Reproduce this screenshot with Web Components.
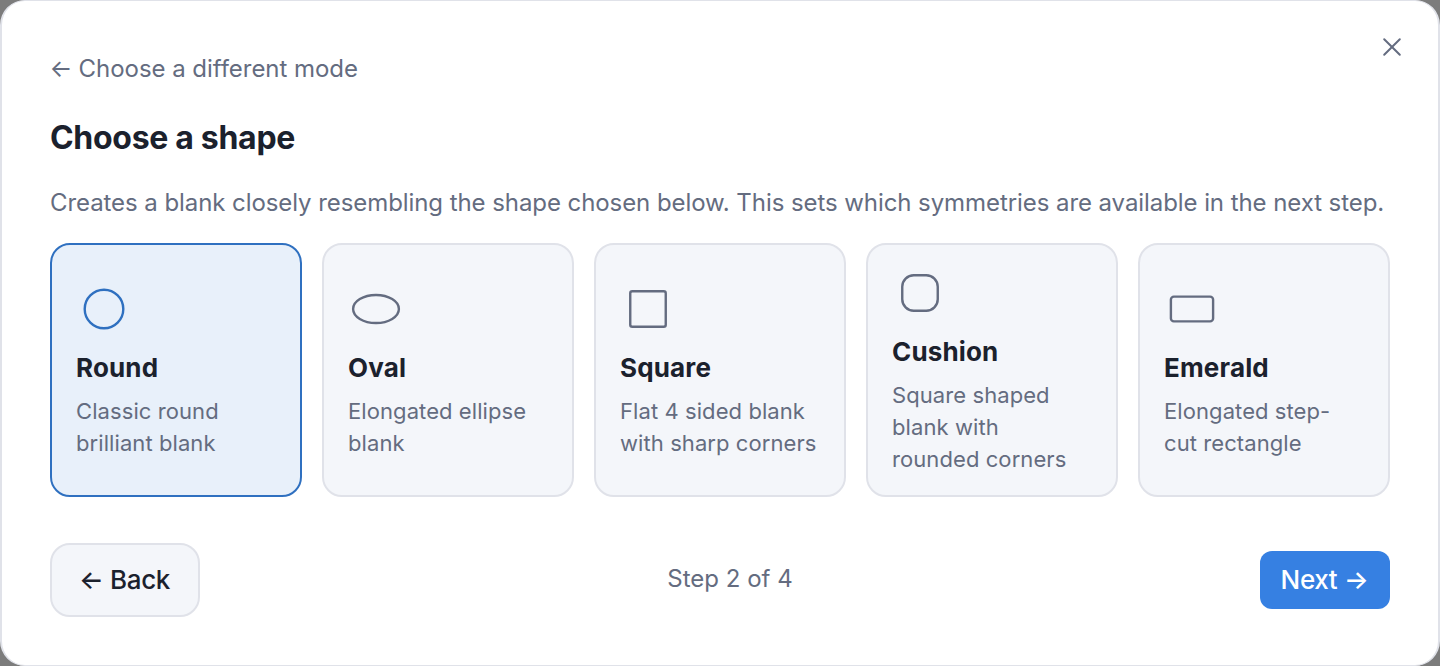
<!DOCTYPE html>
<html lang="en">
<head>
<meta charset="utf-8">
<title>Choose a shape</title>
<style>
  :root {
    --text: #1b212d;
    --muted: #646c80;
    --surface: #f4f6fa;
    --border: #e0e2e9;
    --accent: #2f70c0;
    --accent-soft: #e8f0fa;
    --primary: #3680e2;
  }
  body {
    margin: 0;
    background: #7c7c7c;
    color: var(--text);
    font-family: Inter, "Liberation Sans", sans-serif;
  }
</style>
</head>
<body>
<wizard-dialog>
  <back-link slot="mode">Choose a different mode</back-link>
  <span slot="title">Choose a shape</span>
  <span slot="intro">Creates a blank closely resembling the shape chosen below. This sets which symmetries are available in the next step.</span>
  <shape-card shape="round" name="Round" selected>Classic round brilliant blank</shape-card>
  <shape-card shape="oval" name="Oval">Elongated ellipse blank</shape-card>
  <shape-card shape="square" name="Square">Flat 4 sided blank with sharp corners</shape-card>
  <shape-card shape="cushion" name="Cushion">Square shaped blank with rounded corners</shape-card>
  <shape-card shape="emerald" name="Emerald">Elongated step-cut rectangle</shape-card>
  <wizard-button slot="footer">← Back</wizard-button>
  <step-count slot="footer">Step 2 of 4</step-count>
  <wizard-button slot="footer" primary>Next →</wizard-button>
</wizard-dialog>

<script>
// Outlines of the blanks, all drawn in a 56x56 box
const SHAPES = {
  round: '<circle cx="28" cy="28" r="19.3"/>',
  oval: '<ellipse cx="28" cy="28" rx="22.9" ry="14"/>',
  square: '<rect x="10.25" y="10.25" width="35.5" height="35.5" rx="2"/>',
  cushion: '<rect x="10.25" y="10.25" width="35.5" height="35.5" rx="11.5"/>',
  emerald: '<rect x="6.9" y="15.6" width="42.2" height="24.8" rx="3"/>'
};

class WizardDialog extends HTMLElement {
  constructor() {
    super();
    this.attachShadow({ mode: 'open' });
  }

  connectedCallback() {
    this.shadowRoot.innerHTML = `
      <style>
        :host {
          display: flex;
          flex-direction: column;
          position: relative;
          box-sizing: border-box;
          height: 666px;
          padding: 50px 48px 0;
          background: #fff;
          border: 2px solid var(--border);
          border-top-width: 1px;
          border-bottom-width: 1px;
          border-radius: 25px;
        }
        .close {
          position: absolute;
          top: 36px;
          right: 36px;
          width: 20px;
          height: 20px;
          padding: 0;
          border: 0;
          background: none;
          color: var(--muted);
        }
        svg {
          display: block;
        }
        h2 {
          margin: 31px 0 0;
          font-size: 32px;
          line-height: 40px;
          font-weight: 700;
          letter-spacing: -0.3px;
        }
        p {
          margin: 27px 0 0;
          font-size: 24px;
          line-height: 36px;
          letter-spacing: -0.073px;
          color: var(--muted);
          white-space: nowrap;
        }
        .cards {
          display: grid;
          grid-template-columns: repeat(5, 1fr);
          gap: 20px;
          height: 254px;
          margin-top: 22px;
        }
        footer {
          display: flex;
          align-items: center;
          justify-content: space-between;
          margin-top: 46px;
        }
      </style>
      <button class="close" aria-label="Close">
        <svg width="20" height="20" viewBox="0 0 20 20" fill="none" stroke="currentColor" stroke-width="2" stroke-linecap="round">
          <path d="M2.2 2.2l15.6 15.6M17.8 2.2L2.2 17.8"/>
        </svg>
      </button>
      <slot name="mode"></slot>
      <h2><slot name="title"></slot></h2>
      <p><slot name="intro"></slot></p>
      <div class="cards"><slot></slot></div>
      <footer><slot name="footer"></slot></footer>
    `;
  }
}

class BackLink extends HTMLElement {
  constructor() {
    super();
    this.attachShadow({ mode: 'open' });
  }

  connectedCallback() {
    this.shadowRoot.innerHTML = `
      <style>
        :host {
          display: block;
          font-size: 24px;
          line-height: 36px;
          letter-spacing: -0.04px;
          color: var(--muted);
        }
        .arrow {
          margin: 0 -0.5px;
        }
      </style>
      <span><span class="arrow">←</span> <slot></slot></span>
    `;
  }
}

class ShapeCard extends HTMLElement {
  constructor() {
    super();
    this.attachShadow({ mode: 'open' });
  }

  connectedCallback() {
    const shape = SHAPES[this.getAttribute('shape')] ?? '';
    const name = this.getAttribute('name') ?? '';

    this.shadowRoot.innerHTML = `
      <style>
        :host {
          display: flex;
          flex-direction: column;
          justify-content: center;
          box-sizing: border-box;
          min-width: 0;
          padding: 20px 24px;
          border: 2px solid var(--border);
          border-radius: 20px;
          background: var(--surface);
          color: var(--muted);
        }
        :host([selected]) {
          border-color: var(--accent);
          background: var(--accent-soft);
        }
        :host([selected]) svg {
          color: var(--accent);
        }
        svg {
          display: block;
          width: 56px;
          height: 56px;
        }
        .name {
          margin-top: 12px;
          font-size: 26px;
          line-height: 38px;
          font-weight: 700;
          letter-spacing: 0.16px;
          color: var(--text);
        }
        .text {
          margin-top: 8px;
          padding-right: 2px;
          font-size: 22px;
          line-height: 32px;
          letter-spacing: 0.08px;
        }
      </style>
      <svg viewBox="0 0 56 56" fill="none" stroke="currentColor" stroke-width="2.4">${shape}</svg>
      <div class="name">${name}</div>
      <div class="text"><slot></slot></div>
    `;
  }
}

class StepCount extends HTMLElement {
  constructor() {
    super();
    this.attachShadow({ mode: 'open' });
  }

  connectedCallback() {
    this.shadowRoot.innerHTML = `
      <style>
        :host {
          display: block;
          margin-top: -2px;
          font-size: 24px;
          line-height: 36px;
          color: var(--muted);
        }
      </style>
      <slot></slot>
    `;
  }
}

class WizardButton extends HTMLElement {
  constructor() {
    super();
    this.attachShadow({ mode: 'open' });
  }

  connectedCallback() {
    this.shadowRoot.innerHTML = `
      <style>
        :host {
          display: block;
        }
        button {
          display: block;
          box-sizing: border-box;
          width: 150px;
          height: 74px;
          padding: 0 1px 0 0;
          border: 2px solid var(--border);
          border-radius: 20px;
          background: var(--surface);
          color: var(--text);
          font: 480 26px/36px Inter, "Liberation Sans", sans-serif;
          letter-spacing: -0.35px;
          white-space: nowrap;
        }
        :host([primary]) button {
          width: 130px;
          height: 58px;
          border: 0;
          border-radius: 12px;
          background: var(--primary);
          color: #fff;
        }
      </style>
      <button><slot></slot></button>
    `;
  }
}

customElements.define('wizard-dialog', WizardDialog);
customElements.define('back-link', BackLink);
customElements.define('shape-card', ShapeCard);
customElements.define('step-count', StepCount);
customElements.define('wizard-button', WizardButton);
</script>
</body>
</html>
